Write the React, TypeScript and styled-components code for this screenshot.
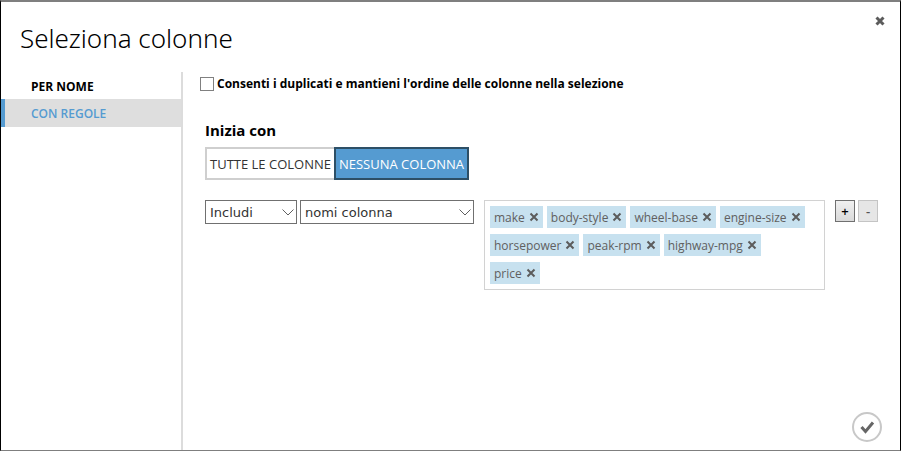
import React, { useState } from 'react';
import styled, { createGlobalStyle } from 'styled-components';

const sans = '"Open Sans", "Noto Sans", sans-serif';

const GlobalStyle = createGlobalStyle`
  * { box-sizing: border-box; }
  body { margin: 0; background: #fff; color: #000; font-family: ${sans}; }
  button, select, input { font-family: inherit; margin: 0; }
`;

const Dialog = styled.div`
  display: flex;
  flex-direction: column;
  min-height: 100vh;
  border: 1px solid #000;
  border-top: 2px solid #7f7f7f;
  border-bottom-color: #7f7f7f;
`;

const Header = styled.header`
  display: flex;
  justify-content: space-between;
  align-items: flex-start;
  height: 70px;
  padding: 14px 14px 0 19px;
`;

const Title = styled.h1`
  margin: 0;
  font-family: "Noto Sans", "Open Sans", sans-serif;
  font-size: 26px;
  font-weight: 300;
  line-height: 44px;
`;

const CloseButton = styled.button`
  display: flex;
  padding: 0 1px;
  border: 0;
  background: none;
`;

const Body = styled.div`
  flex: 1;
  display: grid;
  grid-template-columns: 182px minmax(0, 1fr);
`;

const Nav = styled.nav`
  display: flex;
  flex-direction: column;
  border-right: 2px solid #dcdcdc;
`;

const NavItem = styled.button<{ $active?: boolean }>`
  height: 28px;
  padding: 0 0 0 26px;
  border: 0;
  border-left: 4px solid ${(p) => (p.$active ? '#559bd1' : 'transparent')};
  background: ${(p) => (p.$active ? '#dedede' : 'transparent')};
  color: ${(p) => (p.$active ? '#559bd1' : '#000')};
  font-size: 12px;
  font-weight: ${(p) => (p.$active ? 600 : 700)};
  text-align: left;
  & + & { margin-top: -1px; }
`;

const Main = styled.main`
  display: flex;
  flex-direction: column;
  padding: 4px 18px 8px 17px;
`;

const CheckLabel = styled.label`
  display: flex;
  align-items: center;
  gap: 3px;
  font-size: 12px;
  font-weight: 700;
  line-height: 16px;
`;

const CheckBox = styled.input`
  appearance: none;
  width: 14px;
  height: 14px;
  border: 1px solid #808080;
  background: #fff;
  &:checked { background: #559bd1; }
`;

const Rules = styled.section`
  padding: 28px 0 0 5px;
`;

const Heading = styled.h2`
  margin: 0 0 6px;
  font-size: 15px;
  font-weight: 700;
  line-height: 21px;
`;

const Toggle = styled.div`
  display: flex;
`;

const ToggleButton = styled.button<{ $on: boolean }>`
  height: 33px;
  padding: 0 3px;
  border: 2px solid ${(p) => (p.$on ? '#2d4f66' : '#cfcfcf')};
  background: ${(p) => (p.$on ? '#559bd1' : '#fff')};
  color: ${(p) => (p.$on ? '#fff' : '#333')};
  font-size: 13px;
  white-space: nowrap;
  &:first-child { border-right: 0; }
`;

const RuleRow = styled.div`
  display: flex;
  align-items: flex-start;
  margin-top: 20px;
`;

const SelectBox = styled.div<{ $width: number }>`
  display: grid;
  align-items: center;
  width: ${(p) => p.$width}px;
  margin-right: 3px;
  svg { grid-area: 1 / 1; justify-self: end; margin-right: 3px; pointer-events: none; }
`;

const Select = styled.select`
  grid-area: 1 / 1;
  appearance: none;
  width: 100%;
  height: 24px;
  padding: 0 4px;
  border: 1px solid #707070;
  border-radius: 0;
  background: #fff;
  color: #333;
  font-family: "DejaVu Sans", sans-serif;
  font-size: 13px;
`;

const Tags = styled.ul`
  flex: 0 1 341px;
  display: flex;
  flex-wrap: wrap;
  gap: 6px 4px;
  margin: 0 10px 0 7px;
  padding: 5px 12px 5px 5px;
  border: 1px solid #d2d2d2;
  list-style: none;
`;

const Tag = styled.li`
  display: flex;
  align-items: center;
  gap: 4px;
  height: 22px;
  padding: 0 4px;
  background: #c7e1ef;
  color: #606060;
  font-size: 12px;
  white-space: nowrap;
`;

const TagRemove = styled.button`
  display: flex;
  padding: 0;
  border: 0;
  background: none;
`;

const StepButton = styled.button<{ $muted?: boolean }>`
  display: flex;
  align-items: center;
  justify-content: center;
  width: 20px;
  height: 22px;
  margin-right: 3px;
  padding: 0;
  border: 1px solid ${(p) => (p.$muted ? '#c4c4c4' : '#707070')};
  background: ${(p) => (p.$muted ? '#e6e6e6' : 'linear-gradient(#f0f0f0, #dadada)')};
  color: ${(p) => (p.$muted ? '#555' : '#000')};
  font-size: 13px;
  font-weight: 600;
`;

const Footer = styled.footer`
  display: flex;
  justify-content: flex-end;
  margin-top: auto;
`;

const ConfirmButton = styled.button`
  display: flex;
  padding: 0;
  border: 0;
  background: none;
`;

const Cross = ({ size, width }: { size: number; width: number }) => (
  <svg width={size} height={size} viewBox="0 0 10 10" aria-hidden="true">
    <path d="M1.5 1.5 8.5 8.5M8.5 1.5 1.5 8.5" stroke="#5c5c5c" strokeWidth={width} />
  </svg>
);

const Chevron = () => (
  <svg width="12" height="7" viewBox="0 0 12 7" aria-hidden="true">
    <path d="M.5 .5 6 6 11.5 .5" fill="none" stroke="#606060" />
  </svg>
);

const initialTags = ['make', 'body-style', 'wheel-base', 'engine-size', 'horsepower', 'peak-rpm', 'highway-mpg', 'price'];

export default function App() {
  const [rules, setRules] = useState(true);
  const [none, setNone] = useState(true);
  const [tags, setTags] = useState(initialTags);
  return (
    <>
      <GlobalStyle />
      <Dialog role="dialog" aria-labelledby="dialog-title">
        <Header>
          <Title id="dialog-title">Seleziona colonne</Title>
          <CloseButton aria-label="Chiudi"><Cross size={10} width={3} /></CloseButton>
        </Header>
        <Body>
          <Nav>
            <NavItem $active={!rules} onClick={() => setRules(false)}>PER NOME</NavItem>
            <NavItem $active={rules} onClick={() => setRules(true)}>CON REGOLE</NavItem>
          </Nav>
          <Main>
            <CheckLabel>
              <CheckBox type="checkbox" />
              Consenti i duplicati e mantieni l'ordine delle colonne nella selezione
            </CheckLabel>
            <Rules>
              <Heading>Inizia con</Heading>
              <Toggle>
                <ToggleButton $on={!none} onClick={() => setNone(false)}>TUTTE LE COLONNE</ToggleButton>
                <ToggleButton $on={none} onClick={() => setNone(true)}>NESSUNA COLONNA</ToggleButton>
              </Toggle>
              <RuleRow>
                <SelectBox $width={92}>
                  <Select aria-label="Azione"><option>Includi</option><option>Escludi</option></Select>
                  <Chevron />
                </SelectBox>
                <SelectBox $width={174}>
                  <Select aria-label="Criterio"><option>nomi colonna</option></Select>
                  <Chevron />
                </SelectBox>
                <Tags>
                  {tags.map((tag) => (
                    <Tag key={tag}>
                      {tag}
                      <TagRemove aria-label={`Rimuovi ${tag}`} onClick={() => setTags(tags.filter((t) => t !== tag))}>
                        <Cross size={10} width={2} />
                      </TagRemove>
                    </Tag>
                  ))}
                </Tags>
                <StepButton aria-label="Aggiungi regola">+</StepButton>
                <StepButton $muted aria-label="Rimuovi regola">-</StepButton>
              </RuleRow>
            </Rules>
            <Footer>
              <ConfirmButton aria-label="Conferma">
                <svg width="30" height="30" viewBox="0 0 30 30" aria-hidden="true">
                  <circle cx="15" cy="15" r="14" fill="none" stroke="#c8c8c8" strokeWidth="2" />
                  <path d="M9.5 15 13.5 19.5 21 10.5" fill="none" stroke="#666" strokeWidth="3" />
                </svg>
              </ConfirmButton>
            </Footer>
          </Main>
        </Body>
      </Dialog>
    </>
  );
}
